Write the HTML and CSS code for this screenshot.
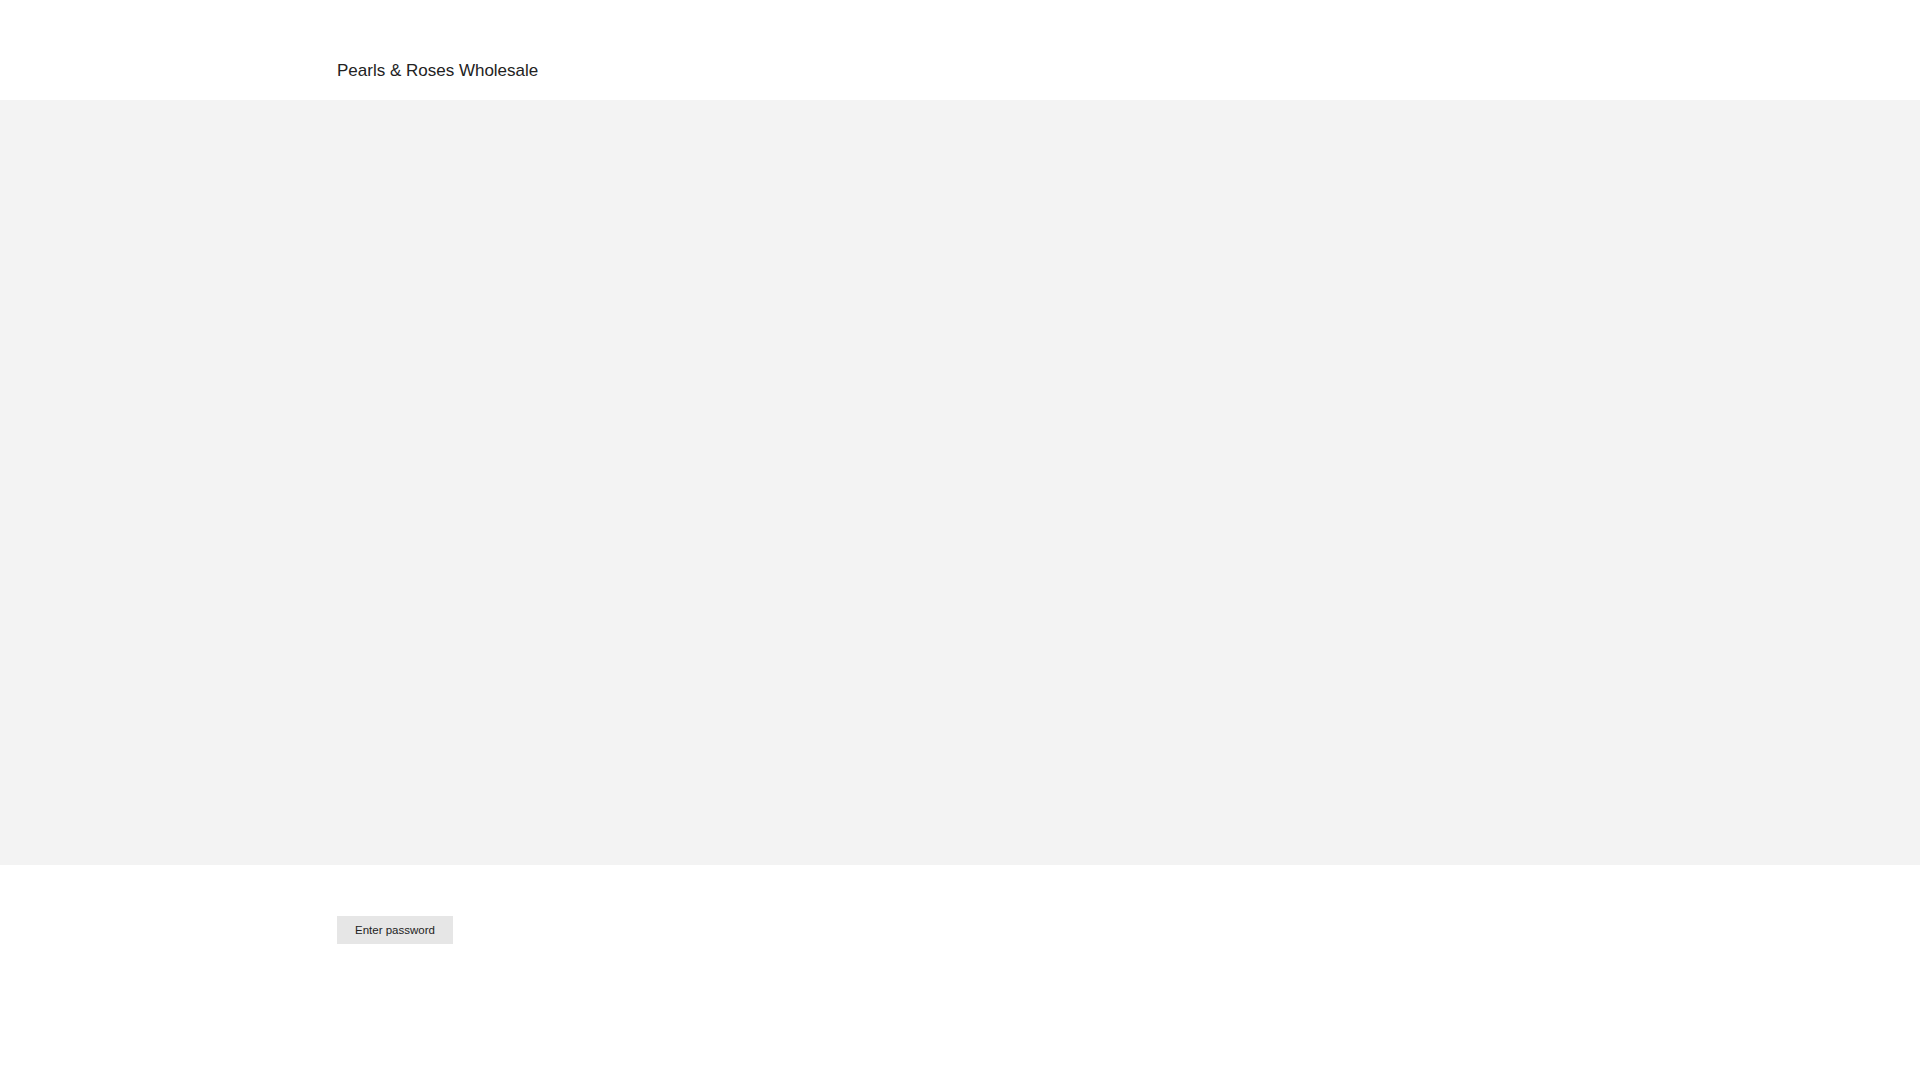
FILE: index.html
```html
<!DOCTYPE html>
<html lang="en">
<head>
  <meta charset="UTF-8">
  <meta name="viewport" content="width=device-width, initial-scale=1.0">
  <title>Pearls &amp; Roses Wholesale</title>
  <link rel="stylesheet" href="styles.css">
</head>
<body>
  <header class="site-header">
    <div class="page-width">
      <h1 class="shop-name">Pearls &amp; Roses Wholesale</h1>
    </div>
  </header>
  <div class="hero"></div>
  <div class="page-width password-area">
    <button class="password-btn" type="button">Enter password</button>
  </div>
</body>
</html>
```

FILE: styles.css
```css
body {
  margin: 0;
  font-family: "Liberation Sans", Arial, sans-serif;
  color: #222;
  background: #fff;
}
.page-width {
  max-width: 1246px;
  margin: 0 auto;
}
.site-header {
  height: 100px;
  display: flex;
  align-items: flex-end;
}
.site-header .page-width {
  width: 100%;
  padding-bottom: 18px;
}
.shop-name {
  margin: 0;
  font-size: 17px;
  font-weight: normal;
  line-height: 22px;
  color: #222;
}
.hero {
  height: 765px;
  background: #f3f3f3;
}
.password-area {
  padding-top: 51px;
}
.password-btn {
  width: 116px;
  height: 28px;
  padding: 0;
  border: none;
  background: #e6e6e6;
  color: #222;
  font-family: "Liberation Sans", Arial, sans-serif;
  font-size: 11.5px;
  cursor: pointer;
}
```
